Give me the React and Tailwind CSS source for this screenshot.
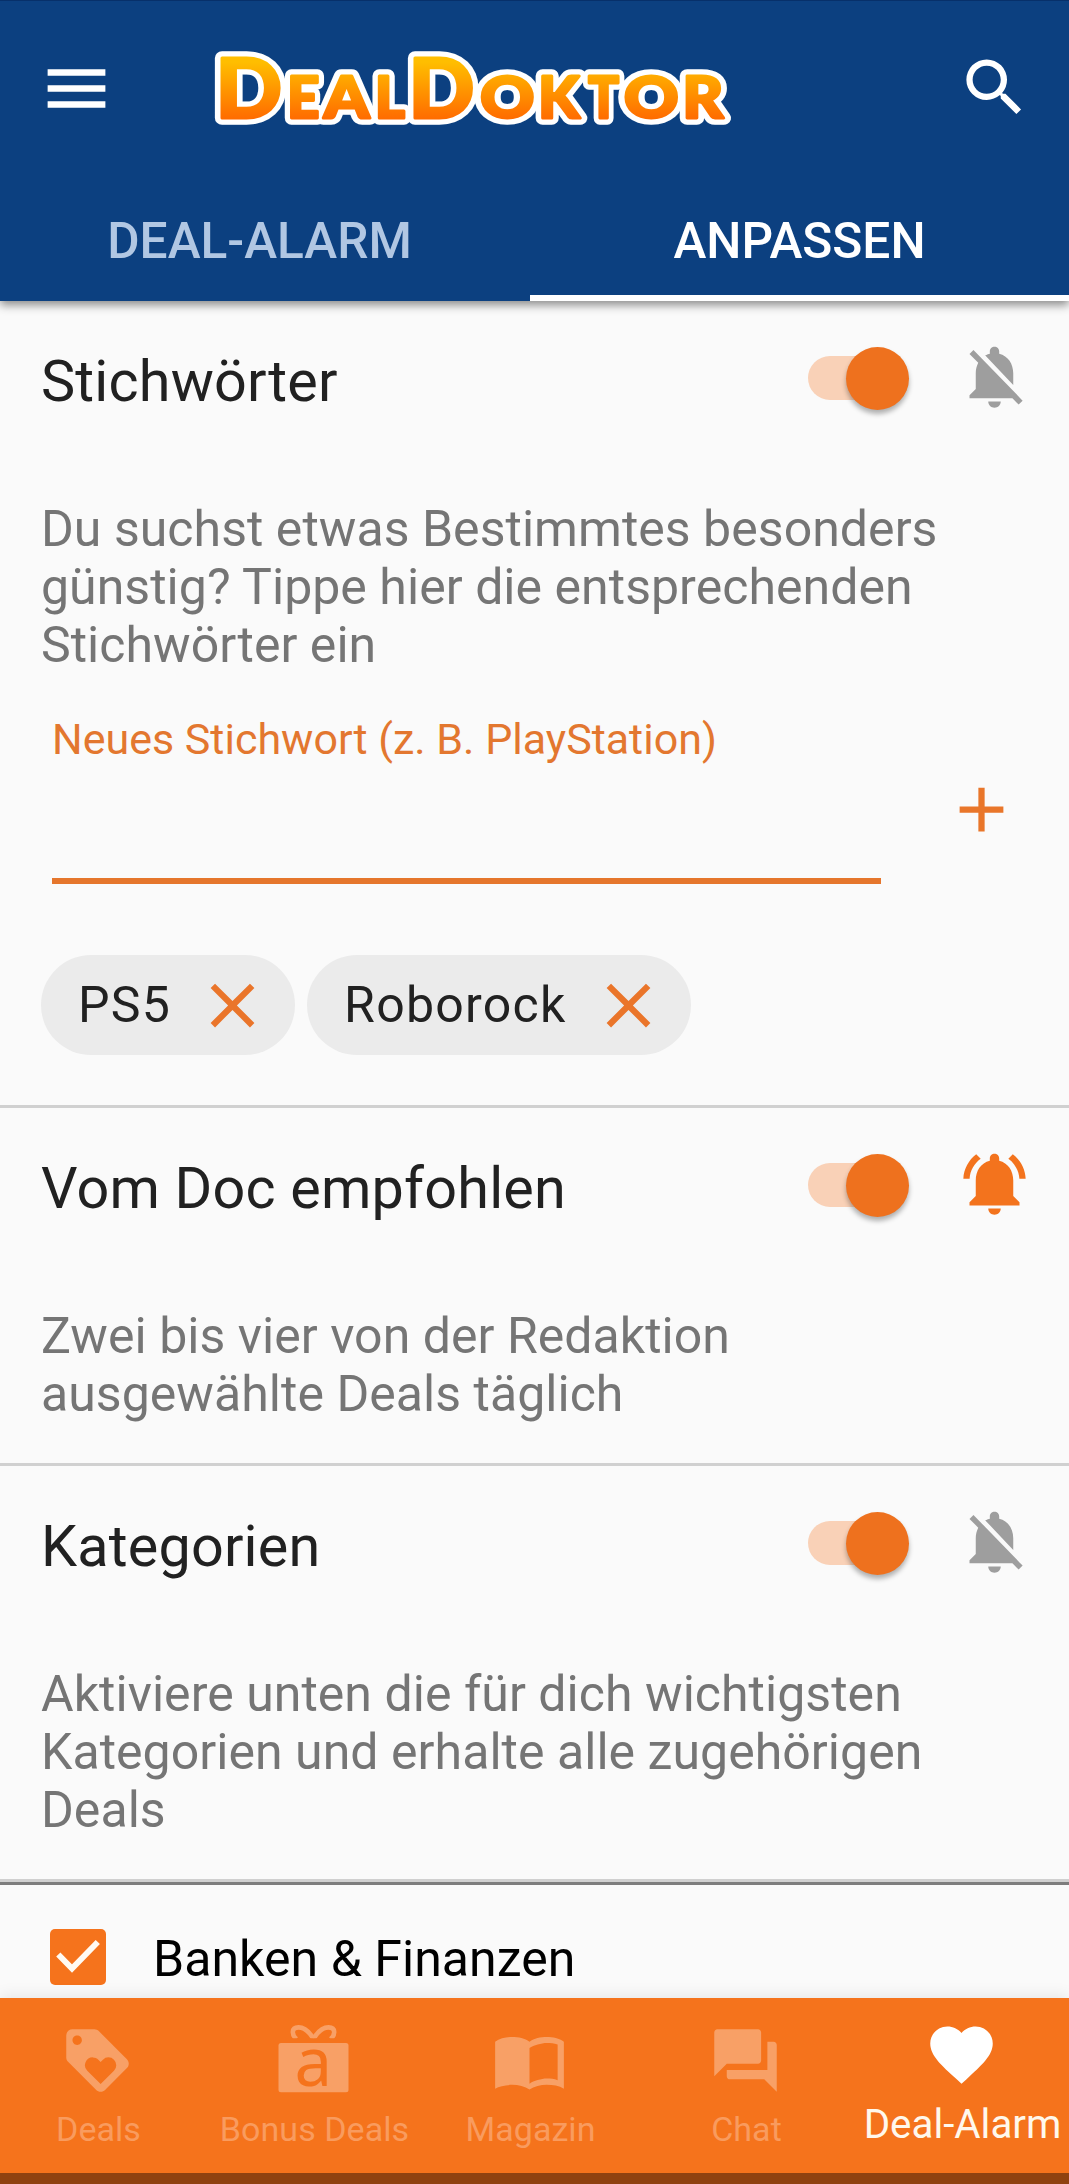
import { useState } from "react";
import {
  MdAdd,
  MdClose,
  MdFavorite,
  MdForum,
  MdLoyalty,
  MdMenu,
  MdNotificationsOff,
  MdSearch,
} from "react-icons/md";

// x and scale of every logo letter, the capitals D are bigger
const logoLetters = [
  { char: "D", x: 215.5, scale: 1.07, size: 81.7 },
  { char: "E", x: 287.2, scale: 0.99, size: 56.5 },
  { char: "A", x: 323.9, scale: 1.14, size: 56.5 },
  { char: "L", x: 375, scale: 1.01, size: 56.5 },
  { char: "D", x: 408.4, scale: 1.06, size: 81.7 },
  { char: "O", x: 480.2, scale: 1.18, size: 56.5 },
  { char: "K", x: 538.3, scale: 1.05, size: 56.5 },
  { char: "T", x: 588.3, scale: 0.9, size: 56.5 },
  { char: "O", x: 624, scale: 1.19, size: 56.5 },
  { char: "R", x: 682.5, scale: 1.11, size: 56.5 },
];

const LogoLayer = ({ fill, stroke, strokeWidth }) => (
  <g fill={fill} stroke={stroke} strokeWidth={strokeWidth} strokeLinejoin="round">
    {logoLetters.map((l, i) => (
      <text
        key={i}
        y="116.3"
        fontSize={l.size}
        transform={`translate(${l.x} 0) scale(${l.scale} 1)`}
      >
        {l.char}
      </text>
    ))}
  </g>
);

const Logo = () => (
  <svg
    viewBox="210 27 530 120"
    className="w-[530px] h-[120px] shrink-0 overflow-visible font-black font-['Lato',sans-serif]"
  >
    <defs>
      <linearGradient
        id="logo"
        gradientUnits="userSpaceOnUse"
        x1="0"
        y1="60"
        x2="0"
        y2="118"
      >
        <stop offset="0" stopColor="#ffbe00" />
        <stop offset="1" stopColor="#ff6a00" />
      </linearGradient>
    </defs>
    <LogoLayer fill="#fff" stroke="#fff" strokeWidth="13.5" />
    <LogoLayer fill="url(#logo)" stroke="url(#logo)" strokeWidth="3" />
  </svg>
);

const BellRinging = ({ className }) => (
  <svg viewBox="0 0 24 24" fill="currentColor" className={className}>
    <path d="M7.58 4.08L6.15 2.65C3.75 4.48 2.17 7.3 2.03 10.5h2c.15-2.65 1.51-4.97 3.55-6.42zM19.97 10.5h2c-.15-3.2-1.73-6.02-4.12-7.85l-1.42 1.43c2.02 1.45 3.39 3.77 3.54 6.42zM18 11c0-3.07-1.64-5.64-4.5-6.32V4c0-.83-.67-1.5-1.5-1.5s-1.5.67-1.5 1.5v.68C7.63 5.36 6 7.92 6 11v5l-2 2v1h16v-1l-2-2v-5zM12 22c1.1 0 2-.9 2-2h-4c0 1.1.9 2 2 2z" />
  </svg>
);

const GiftIcon = ({ className }) => (
  <svg viewBox="0 0 75 75" className={`${className} overflow-visible`}>
    <clipPath id="bow">
      <rect width="75" height="15.3" />
    </clipPath>
    <g
      clipPath="url(#bow)"
      fill="none"
      stroke="currentColor"
      strokeWidth="4.6"
    >
      <path d="M20.5 16C16 12.6 14.6 4.4 22.5 4.4c6.5 0 11.5 5.6 15 11.4" />
      <path d="M54.5 16C59 12.6 60.4 4.4 52.5 4.4c-6.5 0-11.5 5.6-15 11.4" />
    </g>
    <rect x="2.5" y="20" width="70" height="49.3" rx="2.5" fill="currentColor" />
    <text
      x="37.2"
      y="62.6"
      textAnchor="middle"
      fontSize="67"
      fill="#f5731c"
      className="font-['Noto_Sans',sans-serif]"
    >
      a
    </text>
  </svg>
);

const BookIcon = ({ className }) => (
  <svg
    viewBox="0 0 24 24"
    fill="currentColor"
    fillRule="evenodd"
    className={className}
  >
    <path d="M1 6C2.45 4.9 4.55 4.5 6.5 4.5S10.55 4.9 12 6c1.45-1.1 3.55-1.5 5.5-1.5S21.55 4.9 23 6v15c-1.5-.9-3.6-1.2-5.5-1.2-1.95 0-4.05.5-5.5 1.5-1.45-1-3.55-1.5-5.5-1.5S2.3 20.3 1 21zM21 18.3c-1.1-.35-2.3-.5-3.5-.5-1.7 0-4.15.75-5.5 1.6V8c1.35-.85 3.8-1.6 5.5-1.6 1.2 0 2.4.15 3.5.5z" />
  </svg>
);

const Toggle = ({ on, onClick }) => (
  <div
    onClick={onClick}
    className="flex items-center w-[101px] h-[44px] mt-[3px] cursor-pointer"
  >
    <div
      className={`flex items-center w-[88px] h-[44px] rounded-full ${
        on ? "bg-[#f9d1b7]" : "bg-gray-300"
      }`}
    >
      <div
        className={`w-[63px] h-[63px] rounded-full shrink-0 shadow-[0_4px_5px_rgba(0,0,0,0.3)] ${
          on ? "ml-[38px] bg-[#ee711e]" : "bg-gray-50"
        }`}
      />
    </div>
  </div>
);

const Section = ({ title, text, ringing, children }) => {
  const [on, setOn] = useState(true);

  return (
    <section className="border-b-3 border-[#d0d0d0] pl-[41px] pr-[37px] pb-10">
      <div className="flex items-center h-[151px]">
        <h2 className="flex-1 pt-[10px] text-[57.5px] leading-[66px] tracking-[0.2px] text-[#212121]">
          {title}
        </h2>
        <Toggle on={on} onClick={() => setOn(!on)} />
        {ringing ? (
          <BellRinging className="w-[75px] h-[75px] ml-12 text-[#f3731d]" />
        ) : (
          <MdNotificationsOff className="w-[75px] h-[75px] ml-12 text-[#9e9e9e]" />
        )}
      </div>
      <p className="mt-12 text-[50px] leading-[58px] tracking-[0.04px] text-[#757575] whitespace-pre-line">
        {text}
      </p>
      {children}
    </section>
  );
};

const Chip = ({ label, onRemove }) => (
  <div className="flex items-center h-[100px] rounded-full bg-[#ebebeb] pl-[37px] pr-[25px]">
    <span className="text-[50px] tracking-[1.25px] text-[#212121]">
      {label}
    </span>
    <MdClose
      onClick={onRemove}
      className="w-[75px] h-[75px] ml-[24px] cursor-pointer text-[#ea752a]"
    />
  </div>
);

const navItems = [
  { label: "Deals", Icon: MdLoyalty },
  { label: "Bonus Deals", Icon: GiftIcon },
  { label: "Magazin", Icon: BookIcon },
  { label: "Chat", Icon: MdForum },
  { label: "Deal-Alarm", Icon: MdFavorite, active: true },
];

const App = () => {
  const [keywords, setKeywords] = useState(["PS5", "Roborock"]);

  return (
    <div className="flex flex-col w-[1069px] h-[2184px] overflow-hidden bg-[#fafafa] font-['Roboto',sans-serif]">
      {/* App bar */}
      <header className="relative z-10 h-[301px] shrink-0 bg-[#0c4080] border-t border-[#07306a] text-white shadow-[0_4px_9px_rgba(0,0,0,0.45)]">
        <div className="flex items-center h-[176px] pl-[38px] pr-[37px]">
          <MdMenu className="w-[77px] h-[77px] -mt-[1px]" />
          <div className="ml-[95px]">
            <Logo />
          </div>
          <MdSearch className="w-[75px] h-[75px] ml-auto -mt-[4px]" />
        </div>

        {/* Tabs */}
        <nav className="flex h-[124px] text-[49.6px] font-medium">
          <div className="flex items-center justify-center w-[541px] -ml-[11px] pt-[4px] text-[#b1c7e3]">
            DEAL-ALARM
          </div>
          <div className="flex items-center justify-center flex-1 pt-[10px] border-b-6 border-white">
            ANPASSEN
          </div>
        </nav>
      </header>

      {/* Settings */}
      <main className="flex-1 overflow-hidden">
        <Section
          title="Stichwörter"
          text={
            "Du suchst etwas Bestimmtes besonders\ngünstig? Tippe hier die entsprechenden\nStichwörter ein"
          }
        >
          <div className="flex mt-10 pl-[11px]">
            <div className="w-[829px] h-[170px] border-b-6 border-[#e5762c]">
              <label className="block text-[43px] leading-[50px] text-[#e3772f]">
                Neues Stichwort (z. B. PlayStation)
              </label>
            </div>
            <MdAdd className="w-[75px] h-[75px] ml-[63px] mt-[58px] text-[#e9762a]" />
          </div>
          <div className="flex gap-3 mt-[71px] mb-[10px]">
            {keywords.map((k) => (
              <Chip
                key={k}
                label={k}
                onRemove={() => setKeywords(keywords.filter((w) => w !== k))}
              />
            ))}
          </div>
        </Section>

        <Section
          title="Vom Doc empfohlen"
          text={"Zwei bis vier von der Redaktion\nausgewählte Deals täglich"}
          ringing
        />

        <Section
          title="Kategorien"
          text={
            "Aktiviere unten die für dich wichtigsten\nKategorien und erhalte alle zugehörigen\nDeals"
          }
        />

        <div className="flex items-center h-[147px] pl-[50px] border-t-3 border-[#7d7d7d]">
          <div className="w-14 h-14 rounded-[5px] bg-[#f5731c]">
            <svg
              viewBox="0 0 56 56"
              fill="none"
              stroke="#fffaf2"
              strokeWidth="5.9"
              className="w-14 h-14"
            >
              <path d="M8.3 25.5L22 39.5L47.8 13" />
            </svg>
          </div>
          <span className="ml-[47px] pt-[4px] text-[50px] tracking-[0.05px] text-black">
            Banken &amp; Finanzen
          </span>
        </div>
      </main>

      {/* Bottom navigation */}
      <footer className="relative z-10 shrink-0 h-[186px] bg-[#f5731c] border-b-11 border-[#8f4210] shadow-[0_-3px_14px_rgba(0,0,0,0.08)]">
        <div className="flex w-[1080px] -ml-[10px]">
          {navItems.map(({ label, Icon, active }) => (
            <div
              key={label}
              className={`flex flex-col items-center w-[216px] whitespace-nowrap ${
                active ? "pt-[19px] text-white" : "pt-[25px] text-[#f8a066]"
              }`}
            >
              <Icon className="w-[75px] h-[75px] mr-[2px]" />
              <span
                className={
                  active
                    ? "mt-[8px] ml-[1px] text-[40.3px] leading-[50px] text-[#fff8ec]"
                    : "mt-[11px] ml-[1px] text-[34px] leading-[40px] tracking-[0.05px] text-[#f99b5e]"
                }
              >
                {label}
              </span>
            </div>
          ))}
        </div>
      </footer>
    </div>
  );
};

export default App;
